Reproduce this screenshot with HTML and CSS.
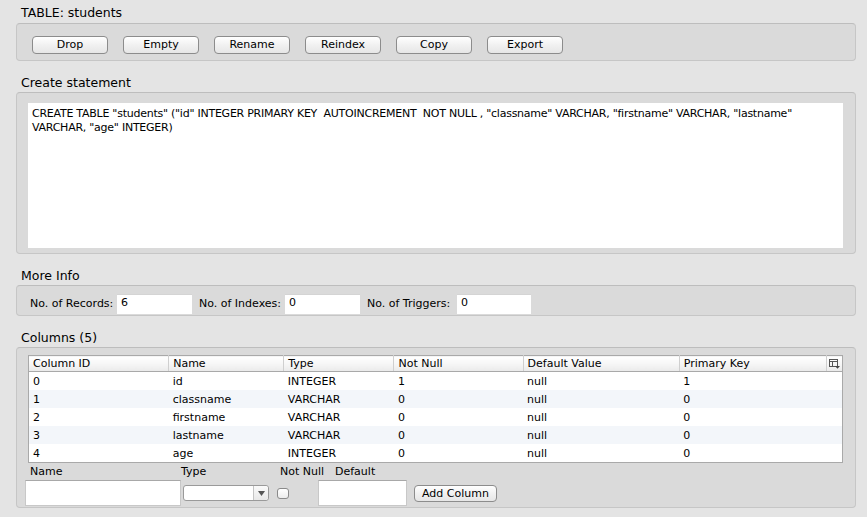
FILE: index.html
```html
<!DOCTYPE html>
<html>
<head>
<meta charset="utf-8">
<link rel="stylesheet" href="styles.css">
</head>
<body>
<div class="page">
  <div class="label first">TABLE: students</div>
  <div class="box actions">
    <button class="btn">Drop</button>
    <button class="btn">Empty</button>
    <button class="btn">Rename</button>
    <button class="btn">Reindex</button>
    <button class="btn">Copy</button>
    <button class="btn">Export</button>
  </div>

  <div class="label">Create statement</div>
  <div class="box stmt">
    <div class="textarea">CREATE TABLE "students" ("id" INTEGER PRIMARY KEY&nbsp; AUTOINCREMENT&nbsp; NOT NULL , "classname" VARCHAR, "firstname" VARCHAR, "lastname" VARCHAR, "age" INTEGER)</div>
  </div>

  <div class="label">More Info</div>
  <div class="box info">
    <span class="info-label l1">No. of Records:</span><div class="field f1">6</div>
    <span class="info-label l2">No. of Indexes:</span><div class="field f2">0</div>
    <span class="info-label l3">No. of Triggers:</span><div class="field f3">0</div>
  </div>

  <div class="label">Columns (5)</div>
  <div class="box cols">
    <table class="grid">
      <colgroup>
        <col class="c1"><col class="c2"><col class="c3"><col class="c4"><col class="c5"><col class="c6"><col class="c7">
      </colgroup>
      <thead>
        <tr>
          <th class="firstcol">Column ID</th><th>Name</th><th>Type</th><th>Not Null</th><th>Default Value</th><th>Primary Key</th>
          <th class="iconcell"><svg width="11" height="10" viewBox="0 0 11 10"><rect x="0.5" y="0.5" width="8" height="7" fill="none" stroke="#555" stroke-width="1"/><line x1="0.5" y1="2.5" x2="8.5" y2="2.5" stroke="#555"/><line x1="3.5" y1="2.5" x2="3.5" y2="7.5" stroke="#555"/><path d="M6 7 L11 7 L8.5 9.8 Z" fill="#444"/></svg></th>
        </tr>
      </thead>
      <tbody>
        <tr><td class="firstcol">0</td><td>id</td><td>INTEGER</td><td>1</td><td>null</td><td>1</td><td></td></tr>
        <tr class="alt"><td class="firstcol">1</td><td>classname</td><td>VARCHAR</td><td>0</td><td>null</td><td>0</td><td></td></tr>
        <tr><td class="firstcol">2</td><td>firstname</td><td>VARCHAR</td><td>0</td><td>null</td><td>0</td><td></td></tr>
        <tr class="alt"><td class="firstcol">3</td><td>lastname</td><td>VARCHAR</td><td>0</td><td>null</td><td>0</td><td></td></tr>
        <tr><td class="firstcol">4</td><td>age</td><td>INTEGER</td><td>0</td><td>null</td><td>0</td><td></td></tr>
      </tbody>
    </table>
    <div class="add-labels">
      <span class="al-name">Name</span>
      <span class="al-type">Type</span>
      <span class="al-nn">Not Null</span>
      <span class="al-def">Default</span>
    </div>
    <div class="add-controls">
      <div class="input in-name"></div>
      <div class="select"><span class="select-arrow"><svg width="7" height="5" viewBox="0 0 7 5"><path d="M0 0 L7 0 L3.5 5 Z" fill="#555"/></svg></span></div>
      <span class="check"></span>
      <div class="input in-def"></div>
      <button class="btn add">Add Column</button>
    </div>
  </div>
</div>
</body>
</html>
```

FILE: styles.css
```css
html, body {
  margin: 0;
  padding: 0;
}
body {
  background: #e4e4e4;
  font-family: "DejaVu Sans", "Liberation Sans", sans-serif;
  color: #000;
  width: 867px;
  height: 517px;
  overflow: hidden;
}
.page {
  display: flex;
  flex-direction: column;
}
.label {
  font-size: 12.5px;
  line-height: 16px;
  height: 16px;
  margin: 14px 0 1px 21px;
}
.label.first {
  margin-top: 5px;
  margin-bottom: 2px;
}
.box {
  margin: 0 11px 0 16px;
  background: #dadada;
  border: 1px solid #c6c6c6;
  border-top-color: #bdbdbd;
  border-radius: 4px;
  box-sizing: border-box;
}
.actions {
  height: 38px;
  display: flex;
  gap: 15px;
  padding: 12px 0 0 15px;
}
.btn {
  width: 76px;
  height: 18px;
  box-sizing: border-box;
  border: 1px solid #8c8c8c;
  border-radius: 4px;
  background: linear-gradient(#ffffff, #f1f1f1 50%, #e6e6e6);
  font-family: "DejaVu Sans", "Liberation Sans", sans-serif;
  font-size: 11px;
  line-height: 16px;
  padding: 0;
  color: #000;
}
.stmt {
  height: 162px;
  padding: 10px 0 0 11px;
}
.textarea {
  width: 815px;
  height: 145px;
  box-sizing: border-box;
  background: #fff;
  font-size: 11px;
  line-height: 14px;
  letter-spacing: -0.25px;
  padding: 4px 4px 0 4px;
}
.info {
  height: 31px;
  display: flex;
  align-items: flex-start;
  padding: 8px 0 0 13px;
  font-size: 11px;
}
.info-label {
  line-height: 20px;
  height: 20px;
  white-space: nowrap;
}
.l1 { width: 87px; }
.l2 { width: 86px; margin-left: 7px; }
.l3 { width: 90px; margin-left: 7px; }
.field {
  height: 20px;
  background: #fff;
  box-sizing: border-box;
  border-top: 1px solid #d4d4d4;
  line-height: 16px;
  padding-left: 4px;
}
.f1 { width: 75px; }
.f2 { width: 75px; }
.f3 { width: 74px; }
.cols {
  height: 161px;
  padding: 7px 0 0 11px;
}
.grid {
  width: 815px;
  table-layout: fixed;
  border-collapse: collapse;
  border: 1px solid #a9a9a9;
  background: #fff;
  font-size: 11px;
}
.c1 { width: 140px; }
.c2 { width: 115px; }
.c3 { width: 110px; }
.c4 { width: 129px; }
.c5 { width: 156px; }
.c6 { width: 147px; }
.c7 { width: 16px; }
.grid th {
  height: 15px;
  padding: 0 0 0 4px;
  text-align: left;
  font-weight: normal;
  line-height: 15px;
  background: linear-gradient(#ffffff, #f4f4f4 60%, #e9e9e9);
  border-bottom: 1px solid #a9a9a9;
  border-left: 1px solid #cfcfcf;
  white-space: nowrap;
  overflow: hidden;
}
.grid th.firstcol {
  border-left: none;
}
.grid th.iconcell {
  padding: 0 0 0 2px;
  vertical-align: middle;
}
.grid th.iconcell svg {
  display: block;
}
.grid td {
  height: 18px;
  box-sizing: border-box;
  padding: 1px 0 0 4px;
  line-height: 17px;
  white-space: nowrap;
  overflow: hidden;
}
.grid tr.alt td {
  background: #f3f6fa;
}
.add-labels {
  display: flex;
  font-size: 11px;
  line-height: 14px;
  height: 14px;
  margin-top: 2px;
}
.al-name { margin-left: 2px; width: 151px; }
.al-type { width: 99px; }
.al-nn { width: 55px; }
.add-controls {
  display: flex;
  align-items: center;
  height: 26px;
  margin-top: 1px;
  margin-left: -3px;
}
.input {
  height: 26px;
  background: #fff;
  box-sizing: border-box;
  border: 1px solid #c8c8c8;
  border-top-color: #a8a8a8;
}
.in-name { width: 156px; }
.select {
  width: 86px;
  height: 16px;
  box-sizing: border-box;
  margin-left: 2px;
  border: 1px solid #9a9a9a;
  border-radius: 3px;
  background: #fff;
  display: flex;
  justify-content: flex-end;
}
.select-arrow {
  width: 14px;
  border-left: 1px solid #c4c4c4;
  background: linear-gradient(#fafafa, #e8e8e8);
  display: flex;
  align-items: center;
  justify-content: center;
  border-radius: 0 3px 3px 0;
}
.check {
  width: 12px;
  height: 11px;
  box-sizing: border-box;
  margin-left: 8px;
  border: 1px solid #8a8a8a;
  border-radius: 3px;
  background: linear-gradient(#ffffff, #ececec);
}
.in-def {
  width: 89px;
  margin-left: 29px;
}
.btn.add {
  width: 83px;
  height: 17px;
  margin-left: 7px;
  line-height: 15px;
}
```
